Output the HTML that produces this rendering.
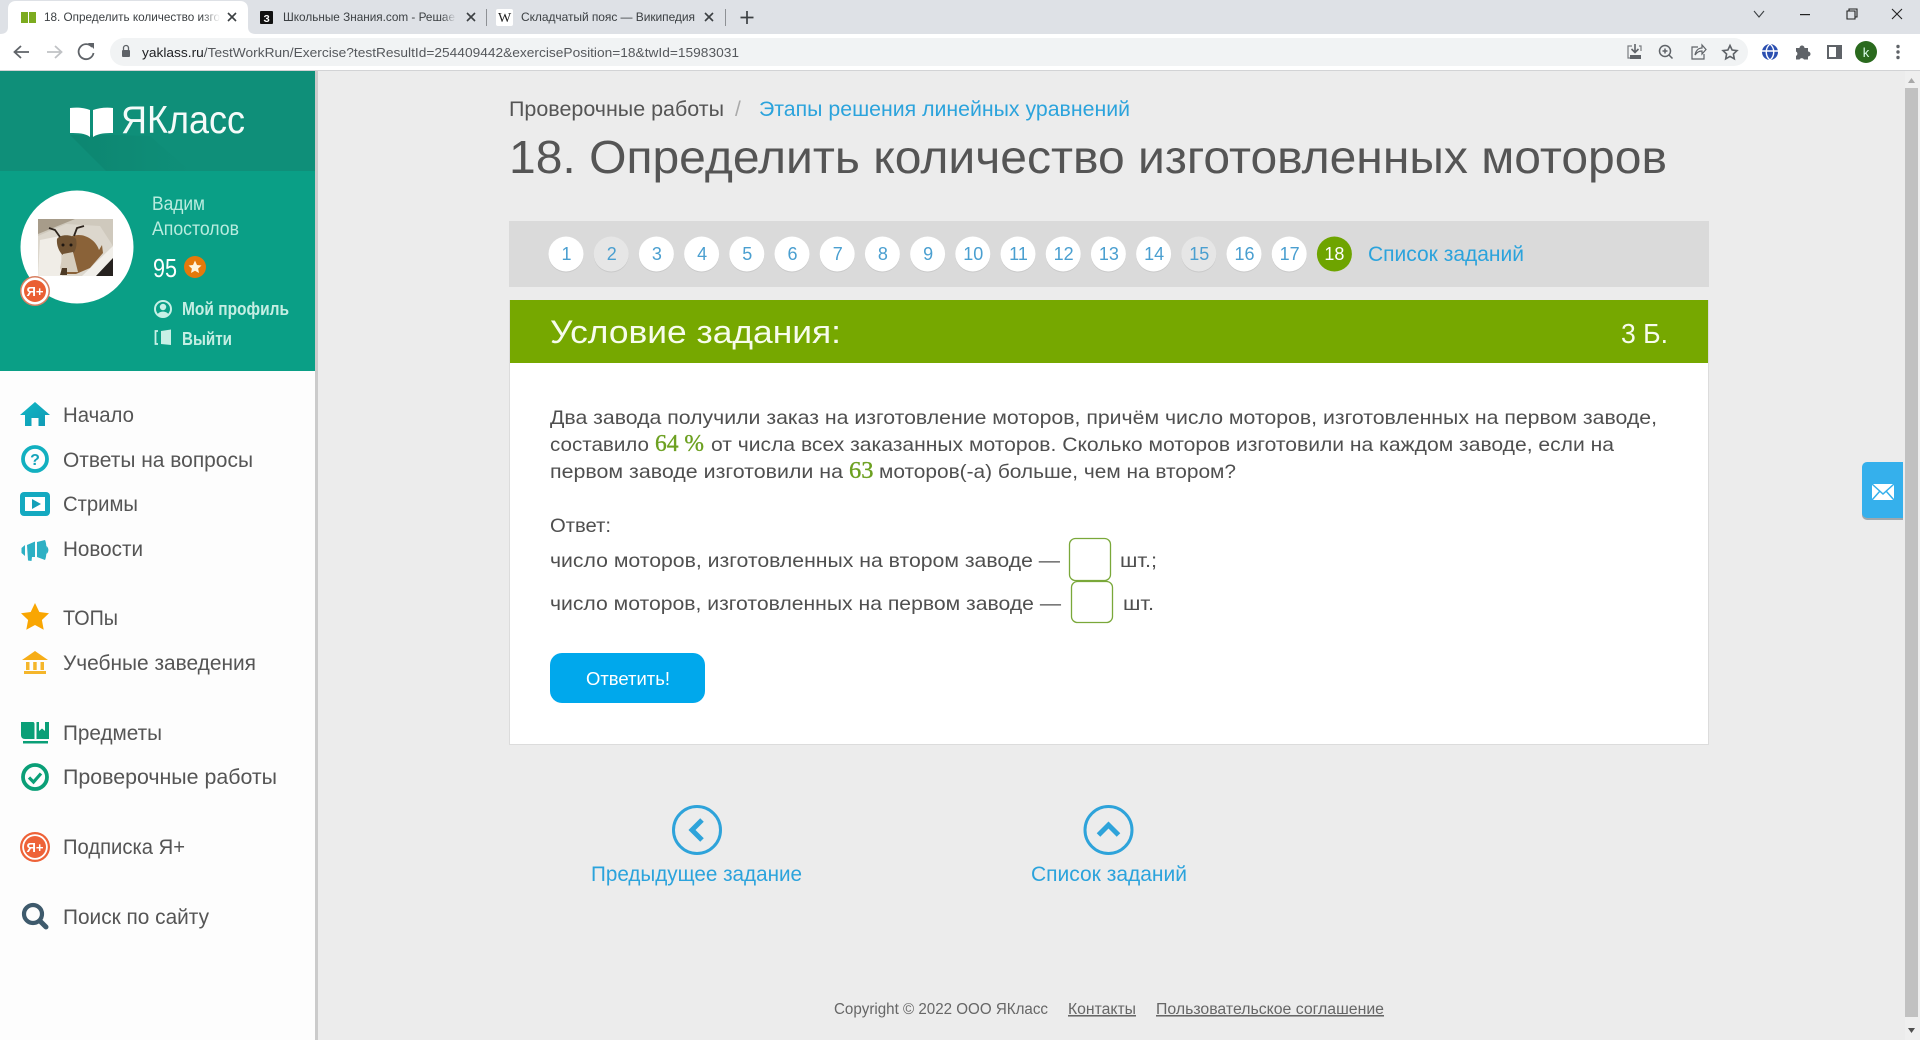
<!DOCTYPE html>
<html lang="ru">
<head>
<meta charset="utf-8">
<title>18. Определить количество изготовленных моторов</title>
<style>
html,body{margin:0;padding:0;width:1920px;height:1040px;overflow:hidden;background:#ececec}
svg{display:block;position:absolute;left:0;top:0}
text{font-family:"Liberation Sans","DejaVu Sans",sans-serif;white-space:pre}
.tab{font-size:12px;fill:#3c4043}
.url{font-size:13px;fill:#202124}
.m{font-size:21px;fill:#555}
.b{font-size:19.5px;fill:#4f4f4f}
.l{fill:#2ba3dc}
.n{font-size:18px;fill:#4a9fd0;text-anchor:middle}
.mj{font-family:"Liberation Serif",serif;font-size:24px;fill:#6ca020;stroke:#6ca020;stroke-width:.35px}
.f{font-size:15.5px;fill:#666}
</style>
</head>
<body>
<svg width="1920" height="1040" viewBox="0 0 1920 1040" xmlns="http://www.w3.org/2000/svg">
<defs>
<linearGradient id="ho" x1="0" x2="1" y1="0" y2="1"><stop offset="0" stop-color="#0fb8c4"/><stop offset="1" stop-color="#1198b5"/></linearGradient>
<linearGradient id="fd" x1="0" x2="1"><stop offset="0" stop-color="#fff" stop-opacity="0"/><stop offset="1" stop-color="#fff"/></linearGradient>
<linearGradient id="fd2" x1="0" x2="1"><stop offset="0" stop-color="#dee1e6" stop-opacity="0"/><stop offset="1" stop-color="#dee1e6"/></linearGradient>
<linearGradient id="sh" x1="0" x2="1"><stop offset="0" stop-color="#0b7f6a" stop-opacity=".55"/><stop offset=".5" stop-color="#0b7f6a" stop-opacity=".3"/><stop offset="1" stop-color="#0b7f6a" stop-opacity="0"/></linearGradient>
<clipPath id="av"><rect x="38" y="219" width="75" height="57"/></clipPath>
</defs>

<!-- page background -->
<rect width="1920" height="1040" fill="#ececec"/>

<!-- browser chrome -->
<rect width="1920" height="34" fill="#dee1e6"/>
<rect y="34" width="1920" height="36" fill="#fff"/>
<rect y="70" width="1920" height="1" fill="#d2d3d5"/>
<path d="M0 34 C6 34 8 31 8 27 V9 C8 4 11 1 16 1 H240 C245 1 248 4 248 9 V27 C248 31 250 34 256 34 Z" fill="#fff"/>
<!-- tab 1 -->
<rect x="21" y="12" width="7" height="11" fill="#7cab1f"/><rect x="29" y="12" width="7" height="11" fill="#7cab1f"/>
<text class="tab" x="44" y="21" textLength="176" lengthAdjust="spacingAndGlyphs">18. Определить количество изго</text>
<rect x="202" y="4" width="18" height="28" fill="url(#fd)"/>
<path d="M228 13 L236 21 M236 13 L228 21" stroke="#3c4043" stroke-width="1.6"/>
<!-- tab 2 -->
<rect x="260" y="11" width="13" height="13" rx="1" fill="#111"/>
<text x="263.5" y="22" style="font-size:10px;font-weight:bold;fill:#fff">З</text>
<text class="tab" x="283" y="21" textLength="172" lengthAdjust="spacingAndGlyphs">Школьные Знания.com - Решае</text>
<rect x="442" y="4" width="14" height="28" fill="url(#fd2)"/>
<path d="M467 13 L475 21 M475 13 L467 21" stroke="#3c4043" stroke-width="1.6"/>
<rect x="486" y="9" width="1" height="17" fill="#8e9195"/>
<!-- tab 3 -->
<rect x="496" y="9" width="17" height="17" rx="2" fill="#fff"/>
<text x="498" y="22" style="font-family:'Liberation Serif',serif;font-size:14px;fill:#222">W</text>
<text class="tab" x="521" y="21" textLength="174">Складчатый пояс — Википедия</text>
<path d="M705 13 L713 21 M713 13 L705 21" stroke="#3c4043" stroke-width="1.6"/>
<rect x="725" y="9" width="1" height="17" fill="#8e9195"/>
<path d="M747 11 V24 M740.5 17.5 H753.5" stroke="#3c4043" stroke-width="1.7"/>
<!-- window controls -->
<path d="M1754 11 L1759 17 L1764 11" fill="none" stroke="#3c4043" stroke-width="1.1"/>
<rect x="1800" y="14" width="10" height="1.2" fill="#222"/>
<path d="M1847 11 V19 H1855 V11 Z M1849 11 V9 H1857 V17 H1855" fill="none" stroke="#222" stroke-width="1.1"/>
<path d="M1892 9 L1902 19 M1902 9 L1892 19" stroke="#222" stroke-width="1.1"/>
<!-- toolbar -->
<path d="M29 52 H15 M21 46 L14.500 52 L21 58" fill="none" stroke="#5f6368" stroke-width="1.800"/>
<path d="M47 52 H61 M55 46 L61.500 52 L55 58" fill="none" stroke="#c0c2c5" stroke-width="1.800"/>
<path d="M92 47 A7.5 7.5 0 1 0 93.5 53" fill="none" stroke="#5f6368" stroke-width="1.800"/>
<path d="M88 43 H94 V49 Z" fill="#5f6368"/>
<rect x="110" y="38" width="1638" height="28" rx="14" fill="#f1f3f4"/>
<rect x="122" y="50" width="8" height="7" rx="1" fill="#5f6368"/>
<path d="M123.5 50 V48 A2.5 2.5 0 0 1 128.5 48 V50" fill="none" stroke="#5f6368" stroke-width="1.3"/>
<text class="url" x="142" y="57" textLength="597" lengthAdjust="spacingAndGlyphs">yaklass.ru<tspan fill="#55585c">/TestWorkRun/Exercise?testResultId=254409442&amp;exercisePosition=18&amp;twId=15983031</tspan></text>
<!-- right icons -->
<path d="M1632 46 H1628 V58 H1632 M1639 46 H1641 V51" fill="none" stroke="#7a7d81" stroke-width="1.200"/>
<path d="M1635 44 V52 M1631.500 49 L1635 52.500 L1638.500 49" fill="none" stroke="#5f6368" stroke-width="1.600"/>
<rect x="1630" y="55" width="11" height="4" fill="#5f6368"/>
<circle cx="1665" cy="51" r="5.500" fill="none" stroke="#5f6368" stroke-width="1.500"/>
<path d="M1669 55 L1672.500 58.500 M1665 48.500 V53.500 M1662.500 51 H1667.500" stroke="#5f6368" stroke-width="1.500"/>
<path d="M1698 47 H1692 V59 H1704 V54" fill="none" stroke="#5f6368" stroke-width="1.200"/>
<path d="M1695 55 C1696 50 1699 48 1702 48 V45 L1706 49.500 L1702 54 V51 C1699 51 1697 52 1695 55 Z" fill="none" stroke="#5f6368" stroke-width="1.200"/>
<path d="M1730 45.500 L1732.100 50 L1737 50.600 L1733.400 54 L1734.300 58.800 L1730 56.400 L1725.700 58.800 L1726.600 54 L1723 50.600 L1727.900 50 Z" fill="none" stroke="#5f6368" stroke-width="1.600"/>
<circle cx="1770" cy="52" r="8" fill="#2b4fb0"/>
<path d="M1770 44 C1765 48 1765 56 1770 60 C1775 56 1775 48 1770 44 Z M1762 51 H1778" fill="none" stroke="#fff" stroke-width="1.400"/>
<path d="M1796 48 h3.500 a2.500 2.500 0 0 1 5 0 h3.500 v3.500 a2.500 2.500 0 0 1 0 5 v3 h-4 a2.500 2.500 0 0 0 -4.500 0 h-3.500 v-3.500 a2.500 2.500 0 0 0 0 -4.500 z" fill="#5f6368"/>
<rect x="1828" y="46" width="13" height="12" fill="#fff" stroke="#5f6368" stroke-width="2"/>
<rect x="1836" y="46" width="5" height="12" fill="#5f6368"/>
<circle cx="1866" cy="52" r="11" fill="#2a6a1e"/>
<text x="1866" y="57" text-anchor="middle" style="font-size:13px;fill:#dfe">k</text>
<circle cx="1898" cy="46.500" r="1.700" fill="#5f6368"/><circle cx="1898" cy="52" r="1.700" fill="#5f6368"/><circle cx="1898" cy="57.500" r="1.700" fill="#5f6368"/>

<!-- scrollbar -->
<rect x="1905" y="71" width="15" height="969" fill="#efefef"/>
<path d="M1908 83 L1911.500 78 L1915 83 Z" fill="#a8a8a8"/>
<rect x="1905" y="88" width="13" height="929" fill="#c1c1c1"/>
<path d="M1908 1028 L1911.500 1033 L1915 1028 Z" fill="#505050"/>

<!-- sidebar -->
<rect x="0" y="71" width="315" height="969" fill="#fdfdfd"/>
<rect x="315" y="71" width="3" height="969" fill="#cbcbcb"/>
<rect x="0" y="71" width="315" height="100" fill="#0f8f79"/>
<path d="M70 135 L106 171 H190 L150 136 L113 135 Z" fill="url(#sh)"/>
<rect x="0" y="171" width="315" height="200" fill="#0a9f86"/>
<!-- logo -->
<path d="M70 108 C78 107 85 108 90 110 V137 C85 133 78 133 70 133 Z" fill="#fff"/>
<path d="M93 110 C99 108 106 107 113 108 V133 C106 133 99 133 93 137 Z" fill="#fff"/>
<text x="121" y="133" textLength="124" lengthAdjust="spacingAndGlyphs" style="font-size:39px;fill:#f4fbf9">ЯКласс</text>
<!-- avatar -->
<circle cx="77" cy="247" r="56.500" fill="#fff"/>
<g clip-path="url(#av)">
<rect x="38" y="219" width="75" height="57" fill="#cfc9bd"/>
<path d="M38 219 H75 L38 234 Z" fill="#a79c8a"/>
<path d="M38 236 L66 224 L100 226 L113 246 L84 276 H38 Z" fill="#dcd7cd"/>
<path d="M40 240 L38 276 H62 L60 236 Z" fill="#f0ede7"/>
<path d="M113 246 L82 276 H96 L113 258 Z" fill="#f1efea"/>
<path d="M113 258 L96 276 H113 Z" fill="#26221f"/>
<path d="M72 236 C84 232 96 240 99 250 L102 245 L103 253 L90 268 L76 274 L64 274 L62 266 L66 252 Z" fill="#8a6238"/>
<path d="M57 239 C60 234 72 234 76 239 C78 247 74 255 68 258 C62 257 56 248 57 239 Z" fill="#6f5232"/>
<path d="M63 254 L73 252 L78 272 H62 L60 268 Z" fill="#d6cdbd"/>
<path d="M60 237 L55 230 L49 228 M74 236 L77 228 L84 226" fill="none" stroke="#2c241d" stroke-width="1.800"/>
<circle cx="63" cy="245" r="1.500" fill="#1f1812"/><circle cx="71" cy="245" r="1.500" fill="#1f1812"/>
<path d="M62 268 L60 275 H67 L67 268 Z" fill="#4d3a25"/>
</g>
<circle cx="35" cy="291" r="15" fill="#d88062"/>
<circle cx="35" cy="291" r="13.500" fill="#fff"/>
<circle cx="35" cy="291" r="11" fill="#ea5f33"/>
<text x="35" y="296" text-anchor="middle" textLength="17" lengthAdjust="spacingAndGlyphs" style="font-size:13px;font-weight:bold;fill:#fff">Я+</text>
<!-- user -->
<text x="152" y="210" textLength="53" lengthAdjust="spacingAndGlyphs" style="font-size:19px;fill:#b9ecdf">Вадим</text>
<text x="152" y="235" textLength="87" lengthAdjust="spacingAndGlyphs" style="font-size:19px;fill:#b9ecdf">Апостолов</text>
<text x="153" y="277" textLength="24" lengthAdjust="spacingAndGlyphs" style="font-size:26px;fill:#fff">95</text>
<circle cx="195" cy="267" r="11" fill="#e5790b"/>
<path d="M195 260.500 L197 265 L201.500 265.500 L198.100 268.600 L199 273 L195 270.700 L191 273 L191.900 268.600 L188.500 265.500 L193 265 Z" fill="#fff4dd"/>
<circle cx="163" cy="309" r="8" fill="none" stroke="#c8f0e6" stroke-width="2"/>
<circle cx="163" cy="307" r="3.200" fill="#c8f0e6"/><path d="M157.500 315 C158 310.500 168 310.500 168.500 315 A8 8 0 0 1 157.500 315 Z" fill="#c8f0e6"/>
<text x="182" y="315" textLength="107" lengthAdjust="spacingAndGlyphs" style="font-size:18px;font-weight:bold;fill:#c5eee3">Мой профиль</text>
<path d="M158 331 H155.500 V344 H158" fill="none" stroke="#c8f0e6" stroke-width="1.800"/>
<path d="M161 331 L171 329.500 V345 L161 344 Z" fill="#c8f0e6"/>
<text x="182" y="345" textLength="50" lengthAdjust="spacingAndGlyphs" style="font-size:18px;font-weight:bold;fill:#c5eee3">Выйти</text>
<!-- menu -->
<text class="m" x="63" y="422" textLength="71" lengthAdjust="spacingAndGlyphs">Начало</text>
<text class="m" x="63" y="467" textLength="190" lengthAdjust="spacingAndGlyphs">Ответы на вопросы</text>
<text class="m" x="63" y="511" textLength="75" lengthAdjust="spacingAndGlyphs">Стримы</text>
<text class="m" x="63" y="556" textLength="80" lengthAdjust="spacingAndGlyphs">Новости</text>
<text class="m" x="63" y="625" textLength="55" lengthAdjust="spacingAndGlyphs">ТОПы</text>
<text class="m" x="63" y="670" textLength="193" lengthAdjust="spacingAndGlyphs">Учебные заведения</text>
<text class="m" x="63" y="740" textLength="99" lengthAdjust="spacingAndGlyphs">Предметы</text>
<text class="m" x="63" y="784" textLength="214" lengthAdjust="spacingAndGlyphs">Проверочные работы</text>
<text class="m" x="63" y="854" textLength="122" lengthAdjust="spacingAndGlyphs">Подписка Я+</text>
<text class="m" x="63" y="924" textLength="146" lengthAdjust="spacingAndGlyphs">Поиск по сайту</text>
<!-- menu icons -->
<path d="M20 415 L35 402 L50 415 H45 V426 H38.500 V418 H31.500 V426 H25 V415 Z" fill="url(#ho)"/>
<circle cx="35" cy="459" r="12" fill="none" stroke="#12b0c0" stroke-width="3.800"/>
<text x="35" y="465" text-anchor="middle" style="font-size:16px;font-weight:bold;fill:#14a3ba">?</text>
<rect x="20" y="492" width="30" height="24" rx="4" fill="#14a9c0"/>
<rect x="25" y="497" width="20" height="14" fill="#fff"/>
<path d="M32 499 L41 504 L32 509 Z" fill="#14a0b8"/>
<path d="M21.500 548 L25 545 V556 L21.500 553 Z M27 545 L35 541.500 V557 L32 557 L31.500 561 L28 560.500 L27.500 553 Z M37 542 L45 540 C47 544 47 556 45 560 L37 557 Z M46.500 546 C49 548 49 552 46.500 554 Z" fill="#2db0c4"/>
<path d="M35 603 L39.300 612 L49 613.200 L41.900 620 L43.700 629.800 L35 625 L26.300 629.800 L28.100 620 L21 613.200 L30.700 612 Z" fill="#f9a602"/>
<path d="M22 660 L35 651 L48 660 Z" fill="#f6ad17"/>
<rect x="26" y="662" width="3.500" height="8" fill="#f5b62b"/><rect x="33.200" y="662" width="3.500" height="8" fill="#f5b62b"/><rect x="40.500" y="662" width="3.500" height="8" fill="#f5b62b"/>
<rect x="24" y="671" width="22" height="3" fill="#f5b62b"/>
<path d="M21 722 H33 C34 722 34.500 723 34.500 724 V739 H25 C22.500 739 21 737.500 21 735 Z M36.500 722 H39 V731 L42 728.500 L45 731 V722 H49 V739 H36.500 Z" fill="#0a9f77"/>
<rect x="23" y="741" width="25" height="2.500" fill="#0a9f77"/>
<circle cx="35" cy="777" r="12" fill="none" stroke="#0a9f77" stroke-width="3.800"/>
<path d="M29 777.500 L33.500 782 L41 773.500" fill="none" stroke="#0a9f77" stroke-width="3.200"/>
<circle cx="35" cy="847" r="15" fill="#ee6238"/>
<circle cx="35" cy="847" r="12.800" fill="#fff"/>
<circle cx="35" cy="847" r="11" fill="#ee6238"/>
<text x="35" y="852" text-anchor="middle" textLength="17" lengthAdjust="spacingAndGlyphs" style="font-size:13px;font-weight:bold;fill:#fff">Я+</text>
<circle cx="33" cy="914" r="9" fill="none" stroke="#3e5a6c" stroke-width="4.200"/>
<path d="M40 921 L46 927" stroke="#3e5a6c" stroke-width="5" stroke-linecap="round"/>

<!-- main -->
<text x="509" y="116" textLength="215" lengthAdjust="spacingAndGlyphs" style="font-size:21.500px;fill:#555">Проверочные работы</text>
<text x="735" y="116" style="font-size:21px;fill:#aaa">/</text>
<text class="l" x="759" y="116" textLength="371" lengthAdjust="spacingAndGlyphs" style="font-size:21.500px">Этапы решения линейных уравнений</text>
<text x="509" y="173" textLength="1158" lengthAdjust="spacingAndGlyphs" style="font-size:46px;fill:#555">18. Определить количество изготовленных моторов</text>

<rect x="509" y="221" width="1200" height="66" fill="#dadada"/>
<g>
<circle cx="566" cy="255" r="17.500" fill="#c9c9c9"/><circle cx="566" cy="254" r="17.500" fill="#fff"/>
<circle cx="611.200" cy="255" r="17.500" fill="#c9c9c9"/><circle cx="611.200" cy="254" r="17.500" fill="#e6e6e6"/>
<circle cx="656.400" cy="255" r="17.500" fill="#c9c9c9"/><circle cx="656.400" cy="254" r="17.500" fill="#fff"/>
<circle cx="701.600" cy="255" r="17.500" fill="#c9c9c9"/><circle cx="701.600" cy="254" r="17.500" fill="#fff"/>
<circle cx="746.800" cy="255" r="17.500" fill="#c9c9c9"/><circle cx="746.800" cy="254" r="17.500" fill="#fff"/>
<circle cx="792" cy="255" r="17.500" fill="#c9c9c9"/><circle cx="792" cy="254" r="17.500" fill="#fff"/>
<circle cx="837.200" cy="255" r="17.500" fill="#c9c9c9"/><circle cx="837.200" cy="254" r="17.500" fill="#fff"/>
<circle cx="882.400" cy="255" r="17.500" fill="#c9c9c9"/><circle cx="882.400" cy="254" r="17.500" fill="#fff"/>
<circle cx="927.600" cy="255" r="17.500" fill="#c9c9c9"/><circle cx="927.600" cy="254" r="17.500" fill="#fff"/>
<circle cx="972.800" cy="255" r="17.500" fill="#c9c9c9"/><circle cx="972.800" cy="254" r="17.500" fill="#fff"/>
<circle cx="1018" cy="255" r="17.500" fill="#c9c9c9"/><circle cx="1018" cy="254" r="17.500" fill="#fff"/>
<circle cx="1063.200" cy="255" r="17.500" fill="#c9c9c9"/><circle cx="1063.200" cy="254" r="17.500" fill="#fff"/>
<circle cx="1108.400" cy="255" r="17.500" fill="#c9c9c9"/><circle cx="1108.400" cy="254" r="17.500" fill="#fff"/>
<circle cx="1153.600" cy="255" r="17.500" fill="#c9c9c9"/><circle cx="1153.600" cy="254" r="17.500" fill="#fff"/>
<circle cx="1198.800" cy="255" r="17.500" fill="#c9c9c9"/><circle cx="1198.800" cy="254" r="17.500" fill="#e6e6e6"/>
<circle cx="1244" cy="255" r="17.500" fill="#c9c9c9"/><circle cx="1244" cy="254" r="17.500" fill="#fff"/>
<circle cx="1289.200" cy="255" r="17.500" fill="#c9c9c9"/><circle cx="1289.200" cy="254" r="17.500" fill="#fff"/>
<circle cx="1334.400" cy="254" r="17.500" fill="#6ea400"/>
<text class="n" x="566.500" y="260">1</text><text class="n" x="611.700" y="260">2</text><text class="n" x="656.900" y="260">3</text><text class="n" x="702.100" y="260">4</text><text class="n" x="747.300" y="260">5</text><text class="n" x="792.500" y="260">6</text><text class="n" x="837.700" y="260">7</text><text class="n" x="882.900" y="260">8</text><text class="n" x="928.100" y="260">9</text><text class="n" x="973.300" y="260">10</text><text class="n" x="1018.500" y="260">11</text><text class="n" x="1063.700" y="260">12</text><text class="n" x="1108.900" y="260">13</text><text class="n" x="1154.100" y="260">14</text><text class="n" x="1199.300" y="260">15</text><text class="n" x="1244.500" y="260">16</text><text class="n" x="1289.700" y="260">17</text>
<text class="n" x="1334.400" y="260" style="fill:#fff">18</text>
</g>
<text class="l" x="1368" y="261" textLength="156" lengthAdjust="spacingAndGlyphs" style="font-size:21px">Список заданий</text>

<rect x="509.500" y="300.500" width="1199" height="444" fill="#fff" stroke="#dcdcdc"/>
<rect x="510" y="300" width="1198" height="63" fill="#76a800"/>
<text x="550" y="343" textLength="291" lengthAdjust="spacingAndGlyphs" style="font-size:32px;fill:#f7fcec">Условие задания:</text>
<text x="1621" y="343" textLength="47" lengthAdjust="spacingAndGlyphs" style="font-size:28px;fill:#f7fcec">3 Б.</text>

<text class="b" x="550" y="424" textLength="1107" lengthAdjust="spacingAndGlyphs">Два завода получили заказ на изготовление моторов, причём число моторов, изготовленных на первом заводе,</text>
<text class="b" x="550" y="451" textLength="99" lengthAdjust="spacingAndGlyphs">составило</text>
<text class="mj" x="655" y="451" textLength="49" lengthAdjust="spacingAndGlyphs">64 %</text>
<text class="b" x="711" y="451" textLength="903" lengthAdjust="spacingAndGlyphs">от числа всех заказанных моторов. Сколько моторов изготовили на каждом заводе, если на</text>
<text class="b" x="550" y="478" textLength="293" lengthAdjust="spacingAndGlyphs">первом заводе изготовили на</text>
<text class="mj" x="849" y="478" textLength="24.500" lengthAdjust="spacingAndGlyphs">63</text>
<text class="b" x="879" y="478" textLength="357" lengthAdjust="spacingAndGlyphs">моторов(-а) больше, чем на втором?</text>
<text class="b" x="550" y="532" textLength="61" lengthAdjust="spacingAndGlyphs">Ответ:</text>
<text class="b" x="550" y="567" textLength="510" lengthAdjust="spacingAndGlyphs">число моторов, изготовленных на втором заводе —</text>
<rect x="1069.500" y="538.500" width="41" height="42" rx="6" fill="#fff" stroke="#7aa83a" stroke-width="1.300"/>
<text class="b" x="1120" y="567" textLength="37" lengthAdjust="spacingAndGlyphs">шт.;</text>
<text class="b" x="550" y="610" textLength="511" lengthAdjust="spacingAndGlyphs">число моторов, изготовленных на первом заводе —</text>
<rect x="1071.500" y="581.500" width="41" height="41" rx="6" fill="#fff" stroke="#7aa83a" stroke-width="1.300"/>
<text class="b" x="1123" y="610" textLength="31" lengthAdjust="spacingAndGlyphs">шт.</text>
<rect x="550" y="653" width="155" height="50" rx="12" fill="#00a8ec"/>
<text x="586" y="685" textLength="84" lengthAdjust="spacingAndGlyphs" style="font-size:18px;fill:#fff">Ответить!</text>

<!-- nav -->
<circle cx="697" cy="830" r="23.500" fill="none" stroke="#2ea3da" stroke-width="3"/>
<path d="M702 820 L692 830 L702 840" fill="none" stroke="#2ea3da" stroke-width="5"/>
<text class="l" x="591" y="881" textLength="211" lengthAdjust="spacingAndGlyphs" style="font-size:21px">Предыдущее задание</text>
<circle cx="1108.500" cy="830" r="23.500" fill="none" stroke="#2ea3da" stroke-width="3"/>
<path d="M1098.500 835 L1108.500 825 L1118.500 835" fill="none" stroke="#2ea3da" stroke-width="5"/>
<text class="l" x="1031" y="881" textLength="156" lengthAdjust="spacingAndGlyphs" style="font-size:21px">Список заданий</text>

<!-- footer -->
<text class="f" x="834" y="1014" textLength="214" lengthAdjust="spacingAndGlyphs">Copyright © 2022 ООО ЯКласс</text>
<text class="f" x="1068" y="1014" textLength="68" lengthAdjust="spacingAndGlyphs" text-decoration="underline">Контакты</text>
<text class="f" x="1156" y="1014" textLength="228" lengthAdjust="spacingAndGlyphs" text-decoration="underline">Пользовательское соглашение</text>

<!-- feedback -->
<path d="M1903 463 H1867 A5 5 0 0 0 1862 468 V515 A5 5 0 0 0 1867 520 H1903 Z" fill="#9ea7ac"/>
<path d="M1903 462 H1867 A5 5 0 0 0 1862 467 V513 A5 5 0 0 0 1867 518 H1903 Z" fill="#35b0ec"/>
<rect x="1872" y="484" width="22" height="16" fill="#fff"/>
<path d="M1872 484 L1883 494 L1894 484 M1872 500 L1880 491 M1894 500 L1886 491" fill="none" stroke="#35b0ec" stroke-width="1.500"/>
</svg>
</body>
</html>
